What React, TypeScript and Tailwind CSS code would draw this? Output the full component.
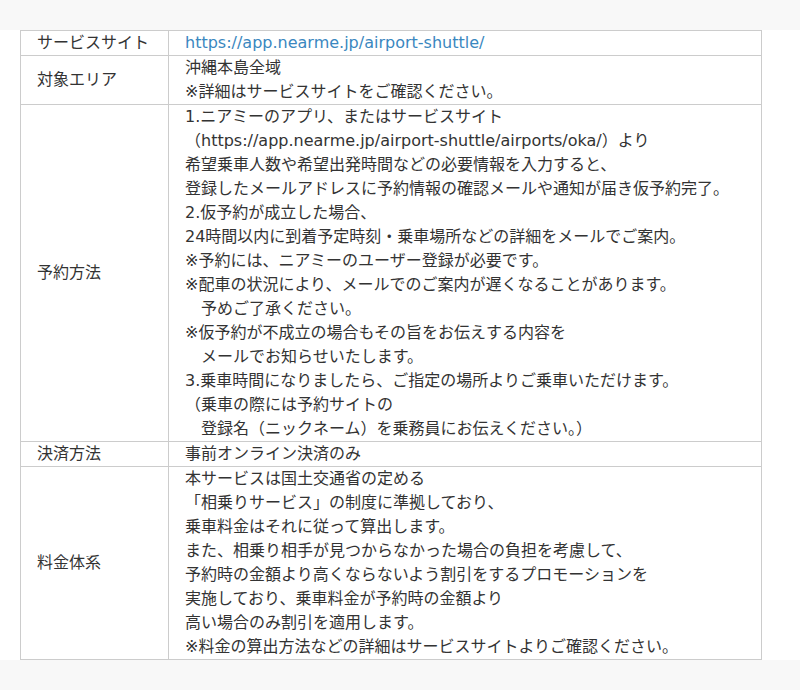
const rows: { label: string; lines: string[]; link?: boolean }[] = [
  { label: 'サービスサイト', lines: ['https://app.nearme.jp/airport-shuttle/'], link: true },
  { label: '対象エリア', lines: ['沖縄本島全域', '※詳細はサービスサイトをご確認ください。'] },
  {
    label: '予約方法',
    lines: [
      '1.ニアミーのアプリ、またはサービスサイト',
      '（https://app.nearme.jp/airport-shuttle/airports/oka/）より',
      '希望乗車人数や希望出発時間などの必要情報を入力すると、',
      '登録したメールアドレスに予約情報の確認メールや通知が届き仮予約完了。',
      '2.仮予約が成立した場合、',
      '24時間以内に到着予定時刻・乗車場所などの詳細をメールでご案内。',
      '※予約には、ニアミーのユーザー登録が必要です。',
      '※配車の状況により、メールでのご案内が遅くなることがあります。',
      '　予めご了承ください。',
      '※仮予約が不成立の場合もその旨をお伝えする内容を',
      '　メールでお知らせいたします。',
      '3.乗車時間になりましたら、ご指定の場所よりご乗車いただけます。',
      '（乗車の際には予約サイトの',
      '　登録名（ニックネーム）を乗務員にお伝えください。）',
    ],
  },
  { label: '決済方法', lines: ['事前オンライン決済のみ'] },
  {
    label: '料金体系',
    lines: [
      '本サービスは国土交通省の定める',
      '「相乗りサービス」の制度に準拠しており、',
      '乗車料金はそれに従って算出します。',
      'また、相乗り相手が見つからなかった場合の負担を考慮して、',
      '予約時の金額より高くならないよう割引をするプロモーションを',
      '実施しており、乗車料金が予約時の金額より',
      '高い場合のみ割引を適用します。',
      '※料金の算出方法などの詳細はサービスサイトよりご確認ください。',
    ],
  },
]

export default function App() {
  return (
    <div
      className="min-h-[690px] bg-[#f8f8f8] py-[30px] text-[16px] leading-[24px] text-[#333]"
      style={{ fontFamily: '"DejaVu Sans", "Noto Sans CJK JP", sans-serif' }}
    >
      <div className="bg-white">
        <table className="ml-[20px] w-[742px] border-collapse">
          <tbody>
            {rows.map((row) => (
              <tr key={row.label}>
                <th className="w-[148px] border border-[#cccccc] px-[16px] text-left align-middle font-normal">
                  {row.label}
                </th>
                <td className="border border-[#cccccc] px-[16px] align-top">
                  {row.lines.map((line) =>
                    row.link ? (
                      <a key={line} href="#" className="block text-[#3a87c0]">
                        {line}
                      </a>
                    ) : (
                      <div key={line} className="whitespace-nowrap">
                        {line}
                      </div>
                    )
                  )}
                </td>
              </tr>
            ))}
          </tbody>
        </table>
      </div>
    </div>
  )
}
